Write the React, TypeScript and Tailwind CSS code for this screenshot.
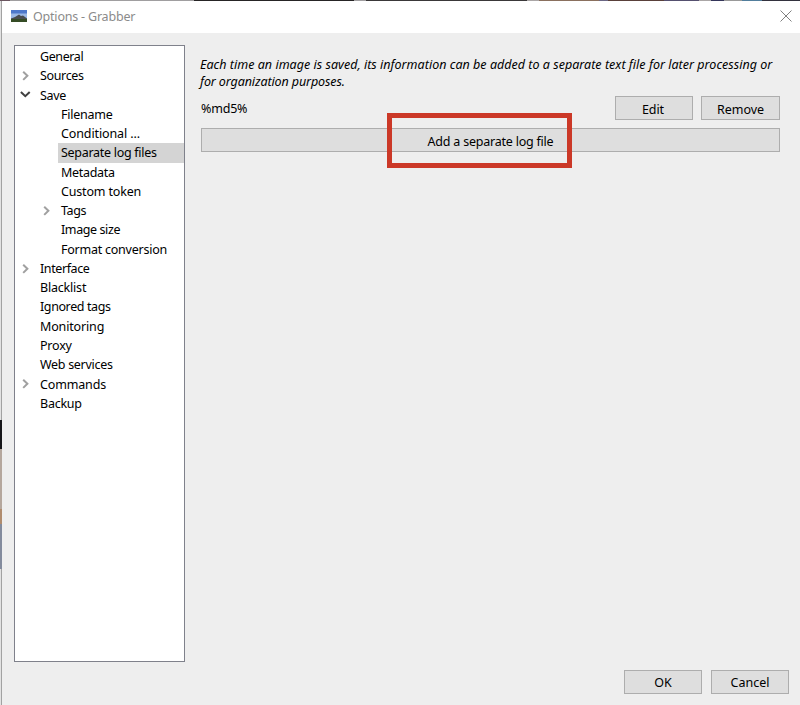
import React, { useState } from 'react';

interface TreeItem {
  label: string;
  tracking: string;
  child?: boolean;
  arrow?: 'open' | 'closed';
}

const items: TreeItem[] = [
  { label: 'General', tracking: 'tracking-[-0.4px]' },
  { label: 'Sources', tracking: 'tracking-[-0.35px]', arrow: 'closed' },
  { label: 'Save', tracking: 'tracking-[-0.3px]', arrow: 'open' },
  { label: 'Filename', tracking: 'tracking-[-0.25px]', child: true },
  { label: 'Conditional ...', tracking: 'tracking-[-0.12px]', child: true },
  { label: 'Separate log files', tracking: 'tracking-[-0.29px]', child: true },
  { label: 'Metadata', tracking: 'tracking-[-0.3px]', child: true },
  { label: 'Custom token', tracking: 'tracking-[-0.17px]', child: true },
  { label: 'Tags', tracking: 'tracking-[-0.4px]', child: true, arrow: 'closed' },
  { label: 'Image size', tracking: 'tracking-[-0.4px]', child: true },
  { label: 'Format conversion', tracking: 'tracking-[-0.24px]', child: true },
  { label: 'Interface', tracking: 'tracking-[-0.4px]', arrow: 'closed' },
  { label: 'Blacklist', tracking: 'tracking-[-0.2px]' },
  { label: 'Ignored tags', tracking: 'tracking-[-0.4px]' },
  { label: 'Monitoring', tracking: 'tracking-[-0.15px]' },
  { label: 'Proxy', tracking: 'tracking-[-0.2px]' },
  { label: 'Web services', tracking: 'tracking-[-0.3px]' },
  { label: 'Commands', tracking: 'tracking-[-0.15px]', arrow: 'closed' },
  { label: 'Backup', tracking: 'tracking-[-0.25px]' },
];

const Arrow: React.FC<{ state?: 'open' | 'closed' }> = ({ state }) => {
  if (state === 'open') {
    return (
      <svg width="11" height="10" viewBox="0 0 11 10" fill="none" stroke="#404040" strokeWidth="2">
        <path d="M0.9 2 L5.3 6.2 L9.7 2" />
      </svg>
    );
  }
  if (state === 'closed') {
    return (
      <svg width="11" height="10" viewBox="0 0 11 10" fill="none" stroke="#a0a0a0" strokeWidth="2">
        <path d="M3.2 0.7 L7.4 4.8 L3.2 8.9" />
      </svg>
    );
  }
  return null;
};

const Button: React.FC<{ children: React.ReactNode; className: string }> = ({ children, className }) => (
  <button
    className={`flex h-6 items-center justify-center border border-[#adadad] bg-[#dedede] whitespace-nowrap ${className}`}
  >
    {children}
  </button>
);

// What shows of the desktop along the top and left of the window
const TopEdge = () => (
  <div className="flex h-px shrink-0">
    <div className="w-2.5 bg-[#6b5560]" />
    <div className="w-[184px] bg-[#a09ea0]" />
    <div className="w-[160px] bg-[#262425]" />
    <div className="w-3 bg-[#a09ea0]" />
    <div className="w-[161px] bg-[#3a3839]" />
    <div className="w-3 bg-[#aaa6a6]" />
    <div className="w-[60px] bg-[#8a705e]" />
    <div className="w-[9px] bg-[#6a6684]" />
    <div className="w-[56px] bg-[#59403a]" />
    <div className="w-[35px] bg-[#55506f]" />
    <div className="w-3 bg-[#aaa6a6]" />
    <div className="w-[13px] bg-[#34355a]" />
    <div className="w-[18px] bg-[#999]" />
    <div className="w-5 bg-[#527e9c]" />
    <div className="flex-1 bg-[#33323e]" />
  </div>
);

const LeftEdge = () => (
  <div className="flex w-0.5 shrink-0 flex-col border-r border-[#a2a2a2] bg-[#e2e2e2]">
    <div className="h-[419px]" />
    <div className="-mr-px h-[29px] bg-[#17171a]" />
    <div className="-mr-px h-[60px] bg-[#b5a79d]" />
    <div className="-mr-px h-[15px] bg-[#b08c6e]" />
    <div className="-mr-px h-[45px] bg-[#838b9d]" />
  </div>
);

const App: React.FC = () => {
  const [selected, setSelected] = useState<string>('Separate log files');

  return (
    <div className="flex h-[705px] w-[800px] flex-col overflow-hidden bg-[#eee] font-['Noto_Sans','Open_Sans',sans-serif] text-[12.5px] text-black">
      <TopEdge />
      <div className="flex min-h-0 flex-1">
        <LeftEdge />
        <div className="flex min-w-0 flex-1 flex-col">
          {/* Title bar */}
          <div className="flex h-8 shrink-0 items-center bg-white pr-2 pl-[9px]">
            <svg className="mb-0.5" width="16" height="12" viewBox="0 0 16 12">
              <rect width="16" height="12" fill="#4e78cb" />
              <rect y="3.5" width="16" height="5" fill="#9bb8e6" />
              <path d="M0 8.5 L4 7 L8 4.4 L10 6 L12 5.4 L16 8.5 V10 H0Z" fill="#4a4d50" />
              <rect y="9" width="16" height="3" fill="#354c25" />
            </svg>
            <span className="ml-[6px] flex-1 tracking-[-0.2px] text-[#8b8b8b]">Options - Grabber</span>
            <svg className="mb-0.5" width="12" height="12" viewBox="0 0 12 12" stroke="#808080" strokeWidth="1" fill="none">
              <path d="M0.5 0.5 L11.5 11.5 M11.5 0.5 L0.5 11.5" />
            </svg>
          </div>

          <div className="flex pt-3 pl-3">
            {/* Settings tree */}
            <div className="h-[617px] w-[171px] shrink-0 border border-[#7f818b] bg-white pt-px">
              {items.map((item) => (
                <div
                  key={item.label}
                  onClick={() => setSelected(item.label)}
                  className={`flex h-[19.28px] items-center ${item.child ? 'pl-[26px]' : 'pl-[5px]'}`}
                >
                  <div className="w-[17px] shrink-0">
                    <Arrow state={item.arrow} />
                  </div>
                  <span
                    className={`flex h-full flex-1 items-center pt-[1.5px] pl-[3px] whitespace-nowrap ${item.tracking} ${
                      item.label === selected ? 'bg-[#d4d4d4]' : ''
                    }`}
                  >
                    {item.label}
                  </span>
                </div>
              ))}
            </div>

            {/* Log files panel */}
            <div className="ml-4 w-[579px] pt-[11px]">
              <p className="-ml-px tracking-[0.025px] text-[12.5px] leading-[17px] whitespace-nowrap italic">
                Each time an image is saved, its information can be added to a separate text file for later processing or
                <br />
                <span className="tracking-[-0.1px]">for organization purposes.</span>
              </p>
              <div className="mt-[6px] flex items-center">
                <span className="flex-1 pt-[3px] tracking-[-0.2px]">%md5%</span>
                <Button className="w-[78px] pt-1 pr-0.5 tracking-[-0.1px]">Edit</Button>
                <Button className="ml-2 w-[79px] pt-1">Remove</Button>
              </div>
              <div className="relative mt-2">
                <Button className="w-full pt-1 tracking-[-0.22px]">Add a separate log file</Button>
                <div className="pointer-events-none absolute -top-[15.5px] left-[186px] h-[55.5px] w-[185px] border-5 border-[#cb3827]" />
              </div>
            </div>
          </div>

          <div className="mt-2 flex justify-end gap-[9px] pr-[11px]">
            <Button className="w-[78px] pt-0.5">OK</Button>
            <Button className="w-[78px] pt-0.5">Cancel</Button>
          </div>
        </div>
      </div>
    </div>
  );
};

export default App;
